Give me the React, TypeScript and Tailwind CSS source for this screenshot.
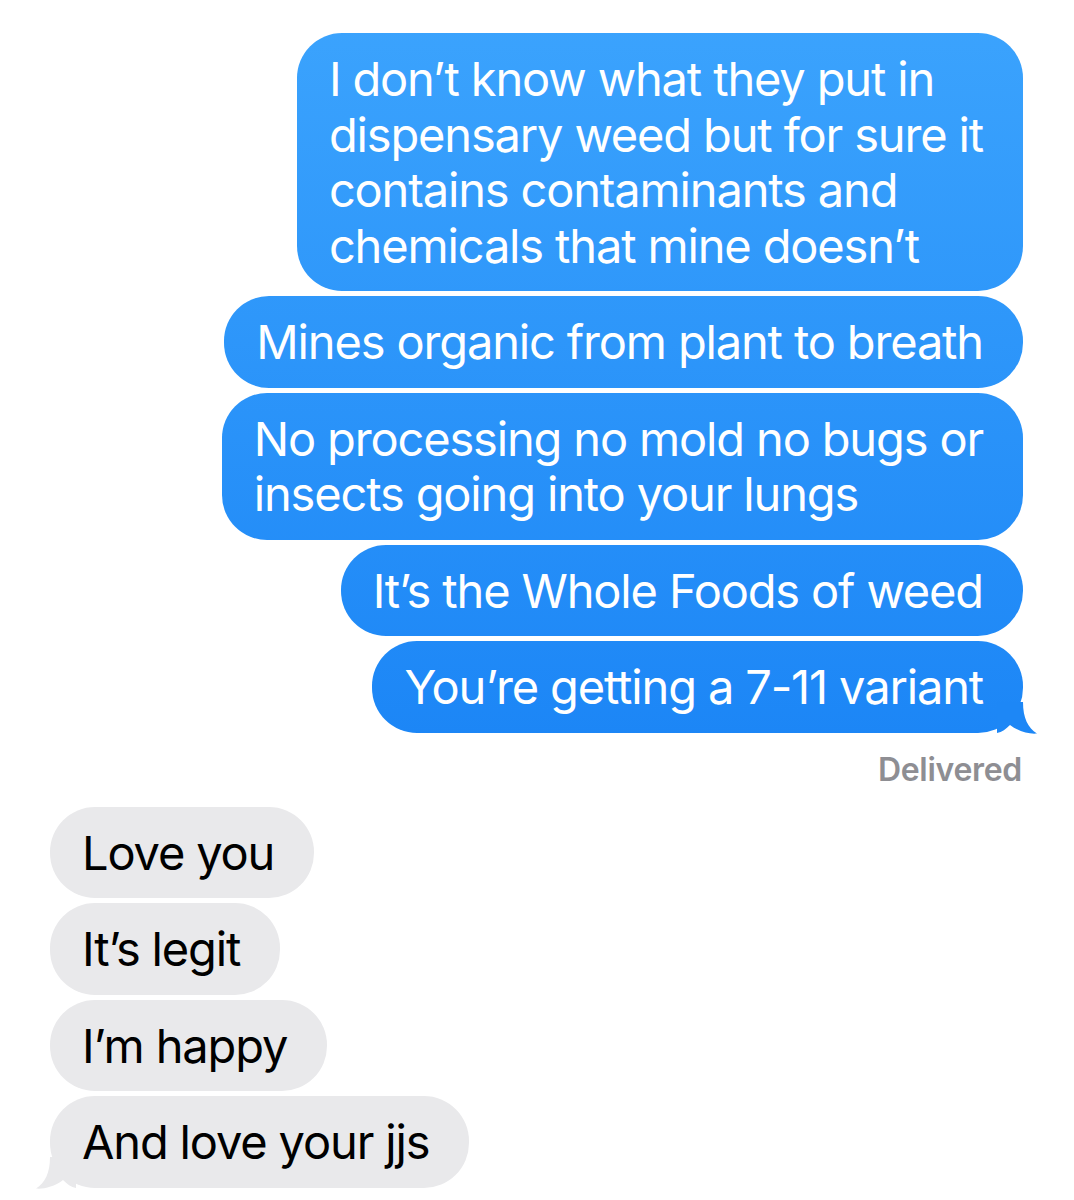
import React from 'react';

interface Msg {
  lines: string[];
  tail?: boolean;
}

const sent: Msg[] = [
  {
    lines: [
      'I don\u2019t know what they put in',
      'dispensary weed but for sure it',
      'contains contaminants and',
      'chemicals that mine doesn\u2019t',
    ],
  },
  { lines: ['Mines organic from plant to breath'] },
  { lines: ['No processing no mold no bugs or', 'insects going into your lungs'] },
  { lines: ['It\u2019s the Whole Foods of weed'] },
  { lines: ['You\u2019re getting a 7-11 variant'], tail: true },
];

const received: Msg[] = [
  { lines: ['Love you'] },
  { lines: ['It\u2019s legit'] },
  { lines: ['I\u2019m happy'] },
  { lines: ['And love your jjs'], tail: true },
];

const font = { fontFamily: 'Inter, "Noto Sans", sans-serif' };

const SentBubble: React.FC<{ msg: Msg }> = ({ msg }) => (
  <div className="relative self-end">
    <div className="rounded-[45px] bg-fixed bg-[linear-gradient(to_bottom,#3ba3fd_20px,#1c86f6_735px)] py-[18px] pl-[32px] pr-[40px] text-[47px] leading-[55.5px] tracking-[-1.15px] text-white">
      {msg.lines.map((l, i) => (
        <div key={i} className="whitespace-nowrap">{l}</div>
      ))}
    </div>
    {msg.tail && (
      <svg className="absolute -right-[15px] -bottom-[1px]" width="41" height="32" viewBox="0 0 41 32">
        <path d="M0 0 L26 0 C26 16 31 26 40 31.5 C33 32.3 22 30 13 23 C9 27 5 30 0 31 Z" fill="#1d87f6" />
      </svg>
    )}
  </div>
);

const ReceivedBubble: React.FC<{ msg: Msg }> = ({ msg }) => (
  <div className="relative self-start">
    <div className="rounded-[45px] bg-[#e9e9eb] py-[18px] pl-[32px] pr-[40px] text-[47px] leading-[55.5px] tracking-[-1.15px] text-black">
      {msg.lines.map((l, i) => (
        <div key={i} className="whitespace-nowrap">{l}</div>
      ))}
    </div>
    {msg.tail && (
      <svg className="absolute -left-[15px] -bottom-[1px]" width="41" height="32" viewBox="0 0 41 32">
        <path d="M41 0 L15 0 C15 16 10 26 1 31.5 C8 32.3 19 30 28 23 C32 27 36 30 41 31 Z" fill="#e9e9eb" />
      </svg>
    )}
  </div>
);

export default function App() {
  return (
    <div className="min-h-[1200px] w-[1074px] overflow-hidden bg-white pl-[50px] pr-[51px] pt-[33px]" style={font}>
      <div className="flex flex-col gap-[5px]">
        {sent.map((m, i) => (
          <SentBubble key={i} msg={m} />
        ))}
      </div>
      <div className="mt-[19px] pr-[1px] text-right text-[32px] font-semibold leading-[36px] tracking-[-0.3px] text-[#8e8e93]">
        Delivered
      </div>
      <div className="mt-[19px] flex flex-col gap-[5px]">
        {received.map((m, i) => (
          <ReceivedBubble key={i} msg={m} />
        ))}
      </div>
    </div>
  );
}
